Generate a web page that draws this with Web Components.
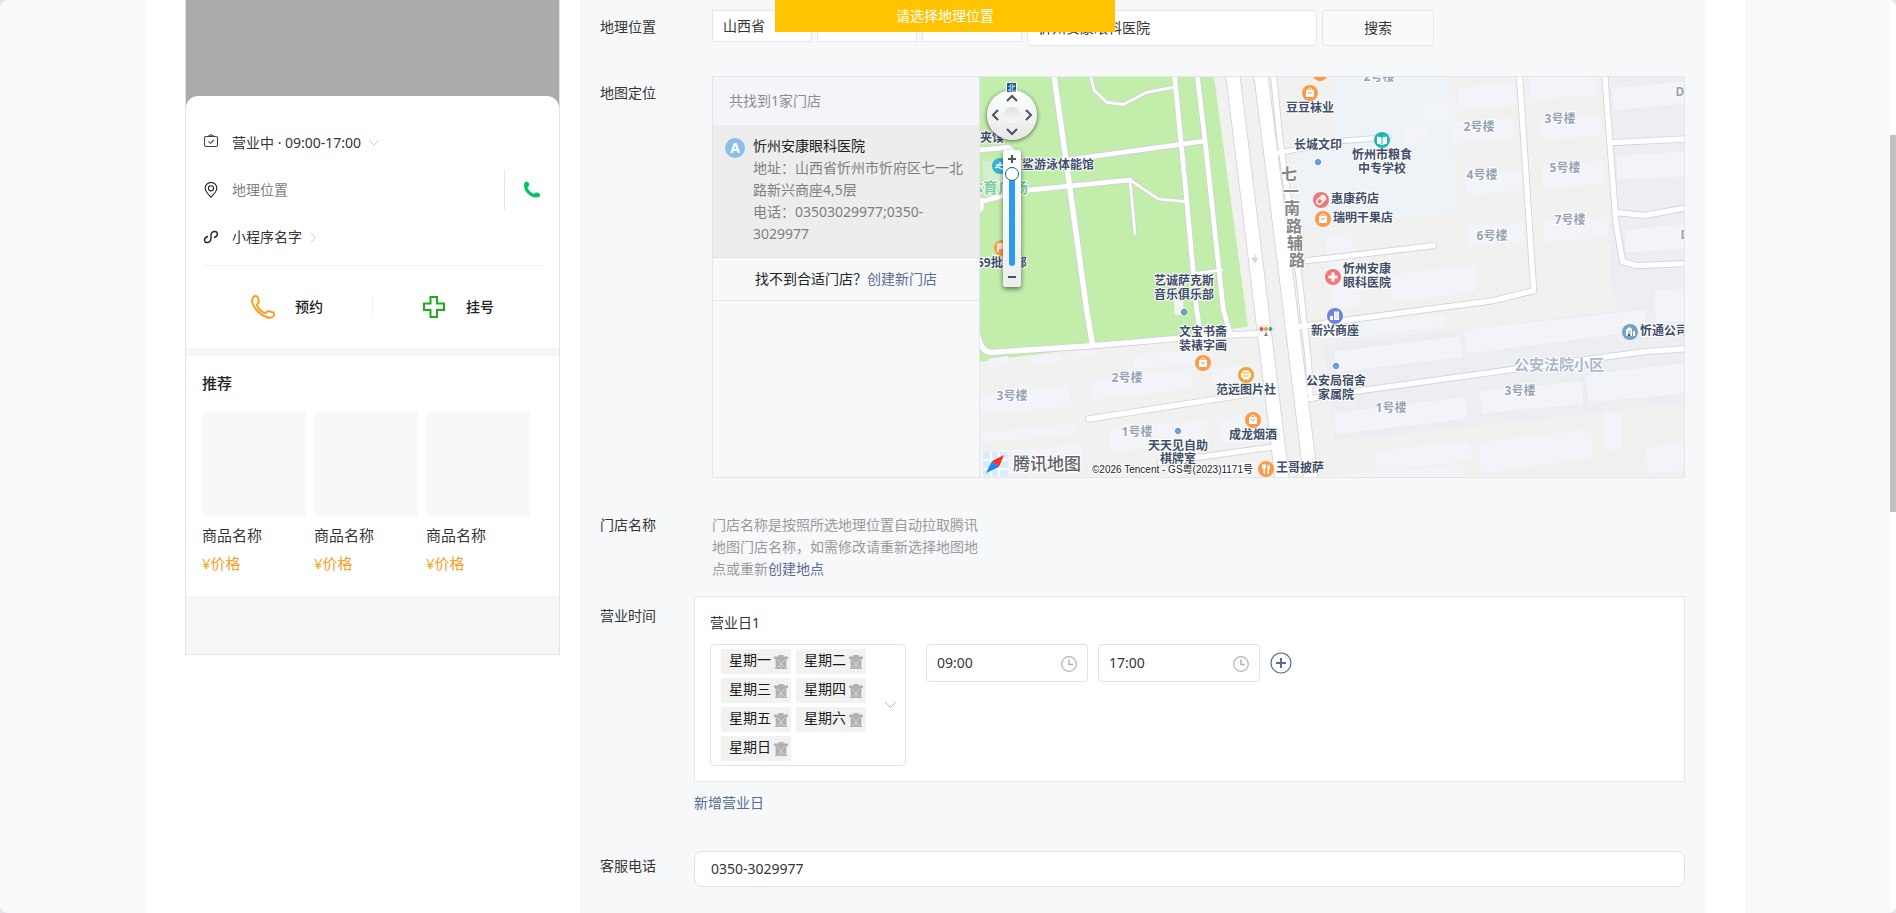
<!DOCTYPE html>
<html lang="zh-CN">
<head>
<meta charset="utf-8">
<title>门店信息</title>
<style>
  html { background: #e4e5e8; }
  body { margin: 0; font: 14px/22px "Noto Sans", "Noto Sans CJK SC", sans-serif; color: #353535; }
</style>
</head>
<body>
<store-page></store-page>

<template id="store-page">
  <style>
    :host { display: flex; position: relative; height: 100vh; overflow: hidden; border-radius: 8px; background: #f7f9fb; }
    main { flex: 1; min-width: 0; overflow: hidden; }
    .content { display: flex; align-items: stretch; max-width: 1600px; min-height: 100vh; margin: 0 auto; background: #fff; box-sizing: border-box; padding: 0 40px; }
    phone-preview { flex: none; width: 375px; }
    settings-form { flex: 1; min-width: 0; margin-left: 20px; }
  </style>
  <main>
    <div class="content">
      <phone-preview></phone-preview>
      <settings-form></settings-form>
    </div>
  </main>
  <page-scrollbar></page-scrollbar>
  <toast-message>请选择地理位置</toast-message>
</template>

<template id="toast-message">
  <style>
    :host { display: block; position: absolute; top: 0; left: calc(50% - 3px); width: 340px; margin-left: -170px; padding: 5px 0; box-sizing: border-box; background: #ffc300; color: #fff; text-align: center; }
  </style>
  <div role="alert"><slot></slot></div>
</template>

<template id="page-scrollbar">
  <style>
    :host { display: flex; flex-direction: column; flex: none; width: 6px; background: #fff; }
    .before { flex: 135; } .thumb { flex: 377; background: #c1c1c1; } .after { flex: 401; }
  </style>
  <div class="before"></div><div class="thumb"></div><div class="after"></div>
</template>

<template id="phone-preview">
  <style>
    :host { display: block; }
    .phone { box-sizing: border-box; border: 1px solid #e4e4e4; border-top: 0; background: #f6f6f6; padding-bottom: 58px; }
    .cover { height: 96px; background: #ababab; }
    .card { background: #fff; border-radius: 12px 12px 0 0; padding: 24px 16px 0; }
    .top { background: #ababab; }
    .bar { display: flex; height: 82px; margin-top: 5px; border-top: 1px solid #f1f1f1; align-items: center; }
    .act { flex: 1; display: flex; align-items: center; justify-content: center; gap: 20px; font-weight: 500; color: #222; }
    .act + .act { border-left: 1px solid #f1f1f1; }
    .call { display: flex; box-sizing: border-box; width: 39px; height: 40px; border-left: 1px solid #e4e4e4; padding-right: 2px; align-items: center; justify-content: flex-end; }
    .rec { margin-top: 8px; background: #fff; padding: 16px 16px 19px; }
    h2 { margin: 0 0 18px; font-size: 15px; line-height: 22px; font-weight: 500; color: #222; }
    .grid { display: flex; gap: 8px; }
    .muted { color: #7f7f7f; }
    svg { display: block; fill: none; }
  </style>
  <div class="phone">
    <div class="cover"></div>
    <div class="top">
      <div class="card">
        <info-row>
          <svg slot="icon" width="16" height="18" viewBox="0 0 16 18" stroke="#444" stroke-width="1.1"><rect x="1.500" y="2.500" width="13" height="10" rx="1.500"/><path d="M5 2.500 8 .6 11 2.500M5.500 7.300l2 2 3.200-3.300"/></svg>
          营业中 · 09:00-17:00
          <svg slot="after" width="10" height="6" viewBox="0 0 10 6" stroke="#d0d0d0"><path d="m.5.5 4.500 4.500L9.500.5"/></svg>
        </info-row>
        <info-row>
          <svg slot="icon" width="16" height="16" viewBox="0 0 16 16" stroke="#222" stroke-width="1.1"><path d="M8 15.200C5 12 2.200 9.500 2.200 6.300a5.800 5.800 0 0 1 11.600 0C13.800 9.500 11 12 8 15.200z"/><circle cx="8" cy="6.300" r="2.600"/></svg>
          <span class="muted">地理位置</span>
          <span slot="end" class="call"><svg width="18" height="18" viewBox="0 0 18 18"><path d="M1.500 1.500C3 .5 5 .6 5.800 2c.8 1.800.2 3.500-1.300 4.500 1.300 3.200 3 5 6.500 6.400 1.300-1.500 3.300-1.700 5-.7 1.500 1 1.500 3 .2 3.800C8 18.500-1.300 9.500 1.500 1.500z" fill="#07c160"/></svg></span>
        </info-row>
        <info-row>
          <svg slot="icon" width="16" height="16" viewBox="0 0 16 16" stroke="#222" stroke-width="1.400" stroke-linecap="round"><path d="M4.500 7.500C-.5 9.500 1.500 14 4.500 13.500c2.500-.3 3.500-2 3.500-4V6c0-2 1.500-3.700 4-3.500 3 .4 3.500 4.500-.5 6"/></svg>
          小程序名字
          <svg slot="after" width="6" height="11" viewBox="0 0 6 11" stroke="#d0d0d0"><path d="m.5.5 5 5-5 5"/></svg>
        </info-row>
        <div class="bar">
          <div class="act"><svg width="24" height="24" viewBox="0 0 24 24" stroke="#fa9d1e" stroke-width="2"><path d="M3 1.500C4.500.5 6.500 1 7 2.800c.5 1.600 1 3.200.8 4.200C7.500 8.500 5.500 9 6 10.500c1.300 3.300 4 6 7.500 7.500 1.600.6 2-1.400 3.500-1.700 1.300-.2 3 .5 4.600 1 1.600.6 2 2.300 1 3.700-1.600 2-4.300 2-6.600 1.300C9 20 3 13.500 1.300 7.500.8 5 1.200 2.800 3 1.500z"/></svg>预约</div>
          <div class="act"><svg width="24" height="24" viewBox="0 0 24 24" stroke="#1aad19" stroke-width="2"><path d="M8.500 2h6.500v6.500h7V15h-7v7H8.500v-7h-6.500V8.500h6.500z"/></svg>挂号</div>
        </div>
      </div>
    </div>
    <div class="rec">
      <h2>推荐</h2>
      <div class="grid">
        <product-card>商品名称<span slot="price">¥价格</span></product-card>
        <product-card>商品名称<span slot="price">¥价格</span></product-card>
        <product-card>商品名称<span slot="price">¥价格</span></product-card>
      </div>
    </div>
  </div>
</template>

<template id="info-row">
  <style>
    :host { display: flex; align-items: center; height: 46px; padding-left: 1px; gap: 13px; margin-bottom: 1px; }
    .text { display: flex; align-items: center; gap: 8px; flex: 1; }
  </style>
  <slot name="icon"></slot><div class="text"><slot></slot><slot name="after"></slot></div><slot name="end"></slot>
</template>

<template id="product-card">
  <style>
    :host { display: block; width: 104px; font-size: 15px; line-height: 28px; }
    .pic { height: 104px; background: #f7f8fa; margin-bottom: 5px; }
    .price { color: #fa9d1e; }
  </style>
  <div class="pic"></div><div><slot></slot></div><div class="price"><slot name="price"></slot></div>
</template>

<template id="form-row">
  <style>
    :host { display: grid; grid-template-columns: 94px minmax(0, 1fr); margin-bottom: 30px; --label-top: 6px; }
    :host([inset]) { grid-template-columns: 112px minmax(0, 1fr); }
    :host([tight]) { margin-bottom: 16px; }
    .label { padding-top: var(--label-top); }
  </style>
  <div class="label"><slot name="label"></slot></div>
  <div><slot></slot></div>
</template>

<template id="settings-form">
  <style>
    :host { display: block; box-sizing: border-box; padding: 10px 20px 24px; background: #f7f8fa; }
    input, select, button { font: inherit; color: inherit; box-sizing: border-box; border: 1px solid #e4e6eb; background: #fff; margin: 0; }
    a { color: #576b95; text-decoration: none; }
    .search { display: flex; gap: 5px; align-items: flex-start; }
    select { appearance: none; width: 100px; height: 32px; padding: 0 10px; border-radius: 0; }
    #keyword { width: 290px; height: 36px; padding: 0 10px 2px; border-radius: 3px; }
    button { width: 112px; height: 36px; border-radius: 3px; background: #fafafa; }
    .finder { display: flex; border: 1px solid #e4e6eb; height: 400px; }
    .note { margin: 0; padding-top: 6px; width: 268px; color: #9a9a9a; }
    #phone { display: block; width: 100%; height: 36px; border-radius: 8px; padding: 0 16px 2px; border-color: #e0e2e4; }
    .add { display: block; margin-top: 10px; margin-bottom: 21px; }
    .hours { --label-top: 9px; } .tel { --label-top: 4px; }
    tencent-map { flex: 1; min-width: 0; }
  </style>
  <form-row inset>
    <label slot="label" for="province">地理位置</label>
    <div class="search">
      <select id="province"><option>山西省</option></select>
      <select aria-label="市"><option></option></select>
      <select aria-label="区"><option></option></select>
      <input id="keyword" aria-label="门店关键词" value="忻州安康眼科医院">
      <button type="button">搜索</button>
    </div>
  </form-row>
  <form-row inset>
    <span slot="label">地图定位</span>
    <div class="finder"><store-results></store-results><tencent-map></tencent-map></div>
  </form-row>
  <form-row inset tight>
    <span slot="label">门店名称</span>
    <p class="note">门店名称是按照所选地理位置自动拉取腾讯地图门店名称，如需修改请重新选择地图地点或重新<a href="#">创建地点</a></p>
  </form-row>
  <form-row class="hours" tight>
    <span slot="label">营业时间</span>
    <business-hours></business-hours>
    <a class="add" href="#">新增营业日</a>
  </form-row>
  <form-row class="tel" tight>
    <label slot="label" for="phone">客服电话</label>
    <input id="phone" type="tel" value="0350-3029977">
  </form-row>
</template>

<template id="store-results">
  <style>
    :host { display: block; flex: none; width: 266px; border-right: 1px solid #e4e6eb; }
    header { padding: 13px 16px; background: #f4f5f9; color: #8c8c8c; }
    .item { display: flex; gap: 8px; padding: 10px 12px 12px; background: #ededed; color: #7f7f7f; border-bottom: 1px solid #e0e2e6; }
    .pin { flex: none; width: 20px; height: 20px; margin-top: 3px; border-radius: 50%; background: #8bbfe9; color: #fff; font-weight: 700; line-height: 20px; text-align: center; }
    strong { font-weight: 400; color: #222; }
    p { margin: 0; }
    .info { width: 213px; }
    footer { padding: 10px 0; text-align: center; border-bottom: 1px solid #e4e6eb; color: #222; }
    a { color: #576b95; text-decoration: none; }
  </style>
  <header>共找到1家门店</header>
  <div class="item"><div class="pin">A</div><div class="info"><strong>忻州安康眼科医院</strong><p>地址：山西省忻州市忻府区七一北路新兴商座4,5层</p><p>电话：03503029977;0350-3029977</p></div></div>
  <footer>找不到合适门店？<a href="#">创建新门店</a></footer>
</template>

<template id="business-hours">
  <style>
    :host { display: block; box-sizing: border-box; border: 1px solid #e4e7eb; background: #fff; padding: 15px 15px; }
    .title { margin-bottom: 10px; }
    .row { display: flex; align-items: flex-start; }
    .days { box-sizing: border-box; display: flex; align-items: center; width: 196px; height: 122px; border: 1px solid #e0e2e4; border-radius: 4px; padding: 0 9px 0 10px; margin-right: 20px; }
    .tags { flex: 1; display: flex; flex-wrap: wrap; gap: 4px 5px; }
    time-field { margin-right: 10px; }
    button { border: 0; padding: 0; background: none; margin-top: 8px; }
    svg { display: block; fill: none; }
  </style>
  <div class="title">营业日1</div>
  <div class="row">
    <div class="days">
      <div class="tags"><day-tag>星期一</day-tag><day-tag>星期二</day-tag><day-tag>星期三</day-tag><day-tag>星期四</day-tag><day-tag>星期五</day-tag><day-tag>星期六</day-tag><day-tag>星期日</day-tag></div>
      <svg width="11" height="7" viewBox="0 0 11 7" stroke="#b2b2b2"><path d="m.5.500 5 5 5-5"/></svg>
    </div>
    <time-field value="09:00" label="开始时间"></time-field>
    <time-field value="17:00" label="结束时间"></time-field>
    <button type="button" aria-label="添加时段"><svg width="22" height="22" viewBox="0 0 22 22" stroke="#576b95"><circle cx="11" cy="11" r="10" stroke-width="1.200"/><path d="M11 6v10M6 11h10" stroke-width="2"/></svg></button>
  </div>
</template>

<template id="day-tag">
  <style>
    :host { display: flex; box-sizing: border-box; width: 70px; height: 25px; padding: 0 3px 0 8px; background: #f2f2f2; color: #1a1a1a; align-items: flex-start; justify-content: space-between; line-height: 22px; }
    button { border: 0; padding: 0; background: none; margin-top: 6px; }
    svg { display: block; }
  </style>
  <slot></slot>
  <button type="button" aria-label="删除"><svg width="14" height="15" viewBox="0 0 14 15"><path d="M4.500 0h5v1.500H14V4h-1.500l-.3 8.500L13.500 14h-13l1.300-1.500L1.500 4H0V1.500h4.500z" fill="#b0b0b0"/><path d="M3 4.500 11 13M11 4.500 3 13M7 9v5" stroke="#dedede" stroke-width=".8" fill="none"/></svg></button>
</template>

<template id="time-field">
  <style>
    :host { display: flex; box-sizing: border-box; width: 162px; height: 38px; border: 1px solid #e0e2e4; border-radius: 4px; padding: 0 10px; align-items: center; }
    input { font: inherit; color: inherit; border: 0; padding: 0; background: none; outline: 0; flex: 1; min-width: 0; }
    svg { flex: none; display: block; fill: none; stroke: #b2b2b2; margin-top: 2px; }
  </style>
  <input type="text">
  <svg width="16" height="16" viewBox="0 0 16 16" stroke-width="1.200"><circle cx="8" cy="8" r="7.300"/><path d="M8 3.500v5h4" stroke-width="1.500"/></svg>
</template>

<template id="tencent-map">
  <style>
    :host { display: block; position: relative; overflow: hidden; background: #f1f1ef; }
    .map { display: block; width: 100%; height: 100%; }
    text { font: 700 12px "Noto Sans", "Noto Sans CJK SC", sans-serif; fill: #3f4e69; stroke: #fff; stroke-width: 2px; paint-order: stroke; stroke-linejoin: round; }
    .mid text { text-anchor: middle; }
    .blk text { fill: #97a2b5; }
    .mid .zone { font-size: 15px; fill: #a9b8d0; }
    .park { font-size: 15px; fill: #76cf98; }
    .street { font-size: 16px; fill: #878787; }
    .brand { font-size: 17px; font-weight: 500; fill: #5f6368; }
    .copy { font: 10px "Liberation Sans", "Noto Sans CJK SC", sans-serif; fill: #222; }
    .bld polygon { fill: #f3f4f9; stroke: #f3f4f9; stroke-width: 12; stroke-linejoin: round; }
    .edge { --outline: 5px; stroke: #cfd3dc; }
    .road { --outline: 0px; stroke: #fff; }
    #roads path { fill: none; stroke: inherit; stroke-linejoin: round; stroke-linecap: round; stroke-width: calc(var(--w) + var(--outline)); }
    .w8 { --w: 8px; } .w14 { --w: 14px; } .w18 { --w: 16px; } .w42 { --w: 40px; }
    .pan { position: absolute; left: 7px; top: 13px; width: 50px; height: 50px; border-radius: 50%; background: linear-gradient(#fff, #e6e8e8); box-shadow: 0 1px 4px #0009; display: grid; grid-template-columns: 16px 18px 16px; grid-template-rows: 16px 18px 16px; place-items: center; }
    .pan button { border: 0; padding: 0; background: none; width: 16px; height: 16px; display: grid; place-items: center; }
    .pan svg { display: block; fill: none; stroke: #4b5258; stroke-width: 2; }
    .n { grid-area: 1 / 2; } .w { grid-area: 2 / 1; } .e { grid-area: 2 / 3; } .s { grid-area: 3 / 2; }
    .hub { grid-area: 2 / 2; width: 16px; height: 16px; border-radius: 50%; background: linear-gradient(#dfe1e1, #fafafa); }
    .north { position: absolute; left: 26px; top: 5px; width: 9px; height: 9px; border: 1px solid #fff; background: #12608f; color: #fff; font-size: 8px; line-height: 9px; text-align: center; }
    .zoom { position: absolute; left: 23px; top: 73px; width: 18px; height: 137px; display: flex; flex-direction: column; border-radius: 3px; background: linear-gradient(#fff, #eceeee); box-shadow: 0 2px 5px #0008; }
    .zoom button { border: 0; padding: 0; background: none; width: 18px; height: 17px; display: grid; place-items: center; }
    .zoom button:last-child { height: 21px; }
    .zoom svg { display: block; stroke: #4b5258; stroke-width: 2; }
    .zoom input { appearance: none; writing-mode: vertical-lr; margin: 0; width: 18px; height: 99px; background: none; }
    .zoom input::-webkit-slider-runnable-track { width: 6px; height: 99px; border-radius: 3px; background: #2b9bee; }
    .zoom input::-webkit-slider-thumb { appearance: none; box-sizing: border-box; width: 14px; height: 14px; margin-left: -4px; border: 1px solid #12639c; border-radius: 50%; background: #fff; }
  </style>
  <svg class="map" viewBox="0 0 704 400" preserveAspectRatio="xMinYMin slice">
    <defs>
      <g id="bag"><circle r="8" fill="#fd9a4a"/><path d="M-4-3h8v7h-8z" fill="#fff"/><path d="M-2-3a2 2 0 0 1 4 0" fill="none" stroke="#fff"/><path d="M-1.500-1a1.500 1.500 0 0 0 3 0" fill="none" stroke="#fd9a4a"/></g>
      <g id="dot"><circle r="2.500" fill="#63a9e6" stroke="#4f83b5"/></g>
      <g id="roads">
        <path class="w42" d="M818 40 894 660 968 1270"/><path class="w42" d="M902 40 980 660 1054 1270"/>
        <path class="w18" d="M940 40 960 240 988 440 1018 660 1045 900 1050 1000"/>
        <path class="w18" d="M281 40 318 300 380 750 398 855"/>
        <path class="w8" d="M390 40 402 90 440 127 490 133 560 97 640 82"/>
        <path class="w14" d="M643 40 680 420 710 750 722 820"/><path class="w14" d="M711 40 735 240 790 750 812 824"/>
        <path class="w14" d="M320 300 735 243"/><path class="w14" d="M50 428 190 392 510 360"/><path class="w8" d="M510 360 595 417 675 425M510 362 525 522M705 640 785 630"/>
        <path class="w14" d="M50 271 145 262 175 288"/><path class="w14" d="M50 460 64 445 64 420"/>
        <path class="w18" d="M52 815Q60 878 96 877L400 857 655 835 860 822 900 822"/>
        <path class="w18" d="M385 1077 860 1003"/><path class="w18" d="M600 1208 945 1160"/>
        <path class="w14" d="M950 280 1000 270 1140 243 1285 232"/><path class="w18" d="M1040 602 1100 595 1420 557"/>
        <path class="w18" d="M1678 40 1721 692 1600 722 1200 775 1020 800"/><path class="w18" d="M1934 40 1968 490 1988 605 2030 617 2190 610M1955 248 2190 236M1970 458 2055 466 2190 441"/>
        <path class="w18" d="M2190 865 2055 875 1660 928 1180 995 1050 1016"/>
      </g>
    </defs>
    <svg width="704" height="400" viewBox="60 51 2112 1200">
      <rect x="60" y="51" width="2112" height="1200" fill="#f1f1ef"/>
      <path d="M60 51H762L864 800 60 905z" fill="#c2edaa"/>
      <path d="M1945 51H2172V1030L1124 1145 1090 852 1500 810 1975 750 1950 660z" fill="#edeef1"/>
      <path d="M1120 51H1468L1492 458 1320 470 1033 507 1003 285 1120 250z" fill="#eef3f8"/>
      <g class="bld">
        <g transform="translate(1080 0)">
          <polygon points="418,90 578,75 580,130 418,145"/><polygon points="633,45 820,60 820,100 637,112"/><polygon points="315,132 398,128 400,176 318,184"/><polygon points="400,192 575,180 577,232 400,242"/><polygon points="665,185 833,172 835,222 667,232"/><polygon points="440,350 600,338 603,384 443,398"/><polygon points="672,325 845,310 847,365 673,378"/><polygon points="675,490 855,478 857,526 677,538"/><polygon points="449,506 606,496 606,540 449,548"/><polygon points="215,650 460,624 462,690 222,718"/><polygon points="882,90 1095,70 1095,126 886,144"/><polygon points="896,294 1095,280 1095,346 898,352"/><polygon points="920,515 1095,500 1095,562 922,570"/><polygon points="22,535 90,526 114,730 46,740"/><polygon points="264,205 320,200 322,240 264,244"/>
        </g>
        <g transform="translate(1080 660)">
          <polygon points="50,220 415,176 420,226 50,270"/><polygon points="436,155 970,96 973,146 446,214"/><polygon points="0,145 370,110 370,132 0,174"/><polygon points="1010,38 1095,32 1095,116 1014,120"/><polygon points="806,290 1095,255 1095,335 810,360"/><polygon points="486,340 780,310 782,366 490,394"/><polygon points="46,405 430,358 434,410 56,456"/><polygon points="856,405 900,405 900,500 856,503"/><polygon points="170,520 445,490 450,535 175,567"/><polygon points="480,495 805,455 814,526 490,573"/><polygon points="985,510 1095,495 1095,565 988,573"/><polygon points="60,592 430,560 430,600 60,610"/>
        </g>
        <g transform="translate(0 660)">
          <polygon points="60,350 325,324 325,372 60,398"/><polygon points="405,305 690,274 695,320 405,350"/><polygon points="530,230 700,215 714,246 526,260"/><polygon points="90,242 140,234 140,246 90,256"/><polygon points="220,236 298,230 298,240 220,249"/><polygon points="345,220 404,215 404,225 345,229"/><polygon points="60,465 340,440 342,460 60,480"/><polygon points="60,525 360,500 362,555 60,585"/><polygon points="455,450 735,430 735,485 455,508"/><polygon points="762,275 855,260 855,294 762,305"/><polygon points="781,430 856,410 890,475 786,484"/><polygon points="648,65 664,65 664,98 650,100"/><polygon points="760,570 880,550 884,590 760,600"/>
        </g>
        <polygon points="72,310 150,300 150,360 78,370" style="fill:#d3efd0;stroke:#d3efd0"/>
      </g>
      <use href="#roads" class="edge"/>
      <use href="#roads" class="road"/>
    </svg>
    <path d="M275 177v8m-3-4 3 5 3-5z" fill="#d4dae4" stroke="#d4dae4"/>
    <g class="blk mid">
      <text x="399" y="4">2号楼</text><text x="499" y="54">2号楼</text><text x="580" y="46">3号楼</text><text x="502" y="102">4号楼</text><text x="585" y="95">5号楼</text><text x="512" y="163">6号楼</text><text x="590" y="147">7号楼</text><text x="540" y="318">3号楼</text><text x="411" y="335">1号楼</text><text x="147" y="305">2号楼</text><text x="32" y="323">3号楼</text><text x="157" y="359">1号楼</text><text x="700" y="19">D</text><text x="705" y="162">D</text>
    </g>
    <g class="mid">
      <text x="330" y="35">豆豆袜业</text><text x="338" y="72">长城文印</text><text x="402" y="82">忻州市粮食</text><text x="402" y="96">中专学校</text><text x="355" y="258">新兴商座</text><text x="356" y="308">公安局宿舍</text><text x="356" y="322">家属院</text><text x="204" y="208">艺诚萨克斯</text><text x="204" y="222">音乐俱乐部</text><text x="223" y="259">文宝书斋</text><text x="223" y="273">装裱字画</text><text x="266" y="317">范远图片社</text><text x="273" y="362">成龙烟酒</text><text x="198" y="373">天天见自助</text><text x="198" y="386">棋牌室</text><text class="zone" x="579" y="293">公安法院小区</text>
    </g>
    <text x="351" y="126">惠康药店</text><text x="353" y="145">瑞明干果店</text><text x="363" y="196">忻州安康</text><text x="363" y="210">眼科医院</text><text x="660" y="258">忻通公司</text><text x="296" y="395">王哥披萨</text>
    <text x="0" y="65">夹馍</text><text x="30" y="92">蓝鲨游泳体能馆</text><text x="-3" y="190">59批发部</text><text class="park" x="-12" y="116">体育广场</text>
    <text class="street" x="301 303 304 306 307 309" y="103 120 137 155 172 189">七一南路辅路</text>
    <use href="#dot" x="338" y="85"/><use href="#dot" x="356" y="289"/><use href="#dot" x="204" y="235"/><use href="#dot" x="198" y="354"/>
    <use href="#bag" x="340" y="-4"/><use href="#bag" x="330" y="16"/><use href="#bag" x="343" y="142"/><use href="#bag" x="223" y="286"/><use href="#bag" x="273" y="343"/>
    <g transform="translate(402 63)"><circle r="8" fill="#1fb8ae"/><path d="M-5-3.500 0-2.500 5-3.500V3.500L0 5-5 3.500z" fill="#fff"/><path d="M0-3V4" stroke="#1fb8ae"/></g>
    <g transform="translate(341 123)"><circle r="8" fill="#f27777"/><rect x="-5" y="-2.500" width="10" height="5" rx="2.500" transform="rotate(-45)" fill="none" stroke="#fff" stroke-width="1.500"/><path d="M0 0 3-3" stroke="#fff" stroke-width="3"/></g>
    <g transform="translate(353 200)"><circle r="8" fill="#f27777"/><path d="M0-4.500V4.500M-4.500 0H4.500" stroke="#fff" stroke-width="3"/></g>
    <g transform="translate(355 239)"><circle r="8" fill="#6b86d9"/><path d="M-5 4V0h3V4zM-1 4V-4.500H4V4z" fill="#fff"/><path d="M0-2.500H3M0 0H3M0 2H3" stroke="#a9b8ea" stroke-width=".7"/></g>
    <g transform="translate(650 255)"><circle r="8" fill="#74a3c4"/><path d="M-4 4V-2L-1-5 2-3V4zM3 4V-1H5V4z" fill="#fff"/><path d="M-2 4V2H0V4M-2-1H1M-2 1H1" stroke="#74a3c4"/></g>
    <g transform="translate(266 298)"><circle r="8" fill="#f2a232"/><path d="M-3-4.500H3V-2.500H5V2.500H3V4.500H-3V2.500H-5V-2.500H-3z" fill="#fff"/><path d="M-2.500 1H2.500M-3-2H3" stroke="#f2a232"/></g>
    <g transform="translate(286 392)"><circle r="8" fill="#fd9a4a"/><path d="M-4-4.500v4h1.500V5h1.500V-.500H0v-4zM1.500 5V-4.500C4.500-4 4.500 0 3 1V5z" fill="#fff"/></g>
    <g transform="translate(20 89)"><circle r="8" fill="#31b4d4"/><path d="M-5 2q2.500-2 5 0t5 0M-4-1h8M0-4v4" fill="none" stroke="#fff" stroke-width="1.500"/></g>
    <g transform="translate(22 171)"><circle r="8" fill="#fd9a4a"/><path d="M-5-4H5V0H-4V4M-5-2H4" fill="none" stroke="#fff" stroke-width="1.500"/></g>
    <g transform="translate(286 252)"><rect x="-8" y="-3" width="16" height="6" rx="3" fill="#fff" stroke="#cfd3dc" stroke-width=".7"/><circle cx="-4.500" r="2" fill="#e44b4b"/><circle r="2" fill="#e5a51d"/><circle cx="4.500" r="2" fill="#35a876"/><path d="M-2 7 0 3 2 7z" fill="#7b8291"/></g>
    <g transform="translate(15 387)"><rect x="-12" y="-12" width="25" height="24" rx="3" fill="#d9ecf8"/><path d="M-4-12V12M4-12V12M-12-4H13M-12 5H13" stroke="#fff" stroke-width="1.500"/><path d="M-9 9-3-3 4 3z" fill="#1687f5"/><path d="M9-9-3-3 4 3z" fill="#f9321c"/></g>
    <text class="brand" x="33" y="393">腾讯地图</text>
    <text class="copy" x="112" y="396">©2026 Tencent - GS粤(2023)1171号</text>
  </svg>
  <div class="pan">
    <button class="n" aria-label="向上"><svg width="12" height="8"><path d="m1 7 5-5 5 5"/></svg></button>
    <button class="w" aria-label="向左"><svg width="8" height="12"><path d="m7 1-5 5 5 5"/></svg></button>
    <div class="hub"></div>
    <button class="e" aria-label="向右"><svg width="8" height="12"><path d="m1 1 5 5-5 5"/></svg></button>
    <button class="s" aria-label="向下"><svg width="12" height="8"><path d="m1 1 5 5 5-5"/></svg></button>
  </div>
  <div class="north">北</div>
  <div class="zoom">
    <button aria-label="放大"><svg width="8" height="8"><path d="M4 0V8M0 4H8"/></svg></button>
    <input type="range" aria-label="缩放" min="0" max="14" value="0">
    <button aria-label="缩小"><svg width="8" height="8"><path d="M0 4H8"/></svg></button>
  </div>
</template>

<script>
  class TemplateElement extends HTMLElement {
    constructor() {
      super();
      this.attachShadow({ mode: "open" }).append(document.getElementById(this.localName).content.cloneNode(true));
    }
  }
  class TimeField extends TemplateElement {
    connectedCallback() {
      const input = this.shadowRoot.querySelector("input");
      input.value = this.getAttribute("value");
      input.setAttribute("aria-label", this.getAttribute("label"));
    }
  }
  customElements.define("time-field", TimeField);
  for (const name of ["info-row", "product-card", "phone-preview", "form-row", "day-tag", "business-hours", "store-results", "tencent-map", "settings-form", "toast-message", "page-scrollbar", "store-page"]) {
    customElements.define(name, class extends TemplateElement {});
  }
</script>
</body>
</html>
